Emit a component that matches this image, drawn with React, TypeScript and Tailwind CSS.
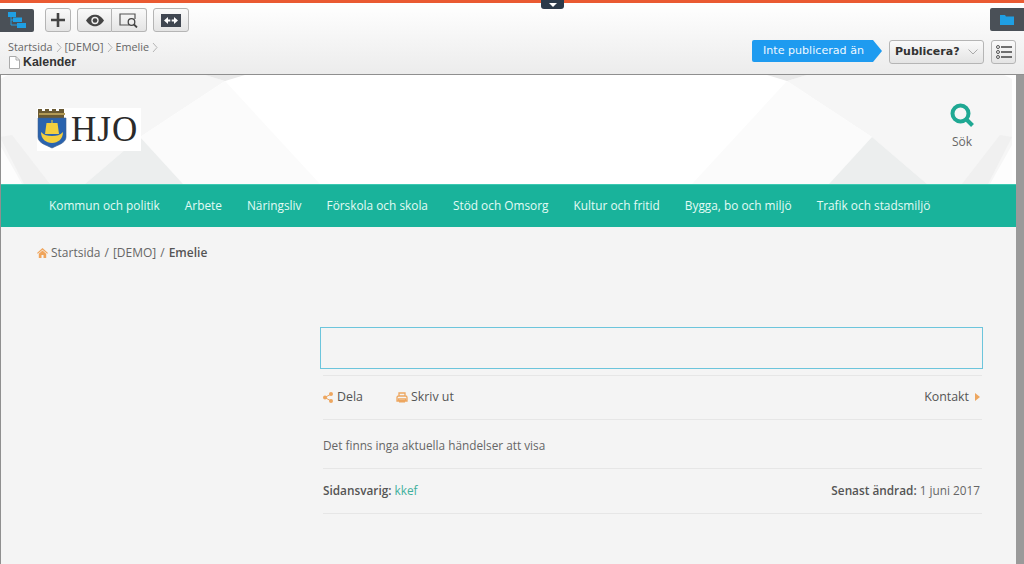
import React from "react";

const leftPolys: [string, string][] = [
  ["8,0 205,0 225,6 140,62 85,109 0,109 0,4", "#f6f6f6"],
  ["225,6 320,109 183,109 140,62", "#fbfbfb"],
  ["140,62 183,109 85,109", "#eceeee"],
  ["205,0 245,0 225,6", "#e9e9e9"],
  ["0,70 22,109 0,109", "#fdfdfd"],
  ["12,60 50,109 24,109 0,62", "#f0f0f0"],
];

function Btn({ className, children }: { className: string; children: React.ReactNode }) {
  return (
    <div className={"flex items-center justify-center h-[24px] border border-[#b5b5b5] bg-gradient-to-b from-[#fafafa] to-[#e4e4e4] " + className}>
      {children}
    </div>
  );
}

function Chev() {
  return (
    <svg width="6" height="11" viewBox="0 0 6 11" className="mx-[3px] inline-block">
      <path d="M1 1l4 4.500L1 10" fill="none" stroke="#b5b5b5" strokeWidth="1" />
    </svg>
  );
}

function Line() {
  return <div className="h-px bg-[#e6e6e6] ml-[3px] mr-px" />;
}

export default function App() {
  return (
    <div className="relative w-[1024px] h-[564px] overflow-hidden flex flex-col bg-[#f4f4f4] font-['Open_Sans',sans-serif]">
      {/* CMS toolbar */}
      <div className="relative h-[75px] shrink-0 border-t-[3px] border-t-[#ea5a32] border-b border-b-[#8f8f8f] bg-gradient-to-b from-white to-[#ececec]">
        <div className="absolute left-[541px] -top-[3px] w-[23px] h-[9px] rounded-b-[3px] bg-[#2b3a4a] flex justify-center items-start pt-[3px]">
          <div className="w-0 h-0 border-x-[4px] border-x-transparent border-t-[4px] border-t-white" />
        </div>

        <div className="flex items-start justify-between pt-[5px] h-[29px]">
          <div className="flex items-center">
            <div className="w-[34px] h-[23px] rounded-r-[2px] bg-[#4a5057] flex items-center justify-center">
              <svg width="18" height="16" viewBox="0 0 18 16">
                <path d="M3 4v9h7M3 8h5" fill="none" stroke="#1f9fe3" />
                <rect x="0" y="0" width="8" height="5" fill="#1f9fe3" />
                <rect x="5" y="5.500" width="9" height="4.500" fill="#1f9fe3" />
                <rect x="9" y="11" width="9" height="5" fill="#1f9fe3" />
              </svg>
            </div>
            <Btn className="ml-[11px] w-[26px] rounded-[3px]">
              <svg width="14" height="14" viewBox="0 0 14 14">
                <path d="M7 0v14M0 7h14" stroke="#444" strokeWidth="2.600" />
              </svg>
            </Btn>
            <div className="ml-[6px] flex">
              <Btn className="w-[35px] rounded-l-[3px]">
                <svg width="20" height="13" viewBox="0 0 20 13">
                  <path d="M1 6.500C4 2 7 .8 10 .8s6 1.200 9 5.700c-3 4.500-6 5.700-9 5.700s-6-1.200-9-5.700z" fill="#444" />
                  <circle cx="10" cy="6.500" r="3.700" fill="#eee" />
                  <circle cx="10" cy="6.500" r="2.300" fill="#444" />
                </svg>
              </Btn>
              <Btn className="w-[35px] rounded-r-[3px] border-l-0">
                <svg width="20" height="15" viewBox="0 0 20 15">
                  <path d="M10 12H1V1h15v5" fill="none" stroke="#555" strokeWidth="1.200" />
                  <circle cx="12.500" cy="9" r="3.300" fill="none" stroke="#444" strokeWidth="1.300" />
                  <path d="M15 11.500l3 3" stroke="#444" strokeWidth="1.800" />
                </svg>
              </Btn>
            </div>
            <Btn className="ml-[6px] w-[36px] rounded-[3px]">
              <svg width="20" height="13" viewBox="0 0 20 13">
                <rect width="20" height="13" fill="#3f4650" />
                <path d="M3 6.500l4-3.500v2.500h2.300v2H7V10zM17 6.500l-4-3.500v2.500h-2.300v2H13V10z" fill="#fff" />
              </svg>
            </Btn>
          </div>
          <div className="w-[34px] h-[23px] rounded-l-[2px] bg-[#4a5057] flex items-center justify-center">
            <svg width="14" height="11" viewBox="0 0 14 11">
              <path d="M0 1h5l1 1.500h8V11H0z" fill="#1f9fe3" />
            </svg>
          </div>
        </div>

        <div className="flex items-start justify-between h-[42px]">
          <div className="pl-[8px] pt-[9px]">
            <div className="flex items-center h-[12px] text-[10.800px] leading-[12px] text-[#666]">
              <span>Startsida</span><Chev /><span>[DEMO]</span><Chev /><span>Emelie</span><Chev />
            </div>
            <div className="flex items-center mt-[2px] h-[14px]">
              <svg width="11" height="13" viewBox="0 0 11 13" className="ml-px mr-[3px]">
                <path d="M.5.500h6.500l3.500 3.500v8.500H.5z" fill="#fff" stroke="#aaa" />
                <path d="M7 .500v3.500h3.500" fill="none" stroke="#aaa" />
              </svg>
              <span className="font-['Liberation_Sans',sans-serif] font-bold text-[12.400px] text-[#333]">Kalender</span>
            </div>
          </div>
          <div className="flex items-start pt-[8px] pr-[8px]">
            <div className="w-[130px] h-[22px] bg-[#1e9bf0] [clip-path:polygon(0_0,121px_0,100%_50%,121px_100%,0_100%)] rounded-l-[2px] flex items-center pl-[11px] text-[#eef8ff] font-['DejaVu_Sans',sans-serif] text-[11.100px] whitespace-nowrap">
              Inte publicerad än
            </div>
            <Btn className="ml-[7px] w-[95px] rounded-[3px] !justify-start pl-[5px] font-['DejaVu_Sans',sans-serif] font-bold text-[11px] text-[#333]">
              Publicera?
              <svg width="10" height="6" viewBox="0 0 10 6" className="ml-[8px]">
                <path d="M.5.500L5 5l4.500-4.500" fill="none" stroke="#aaa" />
              </svg>
            </Btn>
            <Btn className="ml-[7px] w-[25px] rounded-[3px]">
              <svg width="16" height="14" viewBox="0 0 16 14">
                <circle cx="2" cy="2" r="1.500" fill="none" stroke="#555" />
                <circle cx="2" cy="7" r="1.500" fill="none" stroke="#555" />
                <circle cx="2" cy="12" r="1.500" fill="none" stroke="#555" />
                <path d="M5 2h11M5 7h11M5 12h11" stroke="#444" strokeWidth="1.300" />
              </svg>
            </Btn>
          </div>
        </div>
      </div>

      {/* Page */}
      <div className="flex-1 flex min-h-0">
        <div className="w-px bg-[#8f8f8f] shrink-0" />
        <div className="flex-1 min-w-0 flex flex-col">
          <header className="relative h-[109px] shrink-0 bg-white">
            <svg className="absolute inset-0" width="1015" height="109" viewBox="1 0 1015 109">
              {leftPolys.map(([p, c]) => (
                <polygon key={p} points={p} fill={c} />
              ))}
              <g transform="translate(1012 0) scale(-1 1)">
                {leftPolys.map(([p, c]) => (
                  <polygon key={p} points={p} fill={c} />
                ))}
              </g>
            </svg>
            <div className="relative h-full flex justify-between">
              <div className="ml-[36px] mt-[33px] w-[104px] h-[43px] bg-white flex items-start">
                <svg width="30" height="41" viewBox="0 0 30 41">
                  <path d="M1 1h4v2h3V1h4v2h3V1h4v2h3V1h5v9H1z" fill="#6a5a33" />
                  <path d="M2 5h26v2H2z" fill="#b39a55" />
                  <path d="M1 10h28v19c0 6-8 8-14 11C9 37 1 35 1 29z" fill="#2a63ae" stroke="#3f5f8a" strokeWidth=".6" />
                  <path d="M14.500 12h1v3h5l1.500 11H8l1.500-11h5z" fill="#f3cf3e" />
                  <path d="M4 24c3 3 6 4 11 4s8-1 11-4c0 7-5 11-11 11S4 31 4 24z" fill="#f3cf3e" />
                </svg>
                <span className="ml-[4px] mt-[1px] font-['Liberation_Serif',serif] text-[35px] leading-[42px] tracking-[1px] text-[#2a2a2a]">HJO</span>
              </div>
              <div className="mr-[34px] mt-[28px] flex flex-col items-center w-[40px]">
                <svg width="24" height="24" viewBox="0 0 24 24">
                  <circle cx="10.500" cy="10.500" r="8" fill="none" stroke="#1fa893" strokeWidth="4" />
                  <path d="M16.500 16.500l6 6" stroke="#1fa893" strokeWidth="4" />
                </svg>
                <span className="mt-[6px] text-[12px] leading-[18px] text-[#666]">Sök</span>
              </div>
            </div>
          </header>

          <nav className="h-[43px] shrink-0 bg-[#19b39b] border-t border-t-[#3cc9b2] flex items-center pl-[48px] gap-[25px] text-[11.850px] text-[#e3fbf5] whitespace-nowrap">
            <span>Kommun och politik</span>
            <span>Arbete</span>
            <span>Näringsliv</span>
            <span>Förskola och skola</span>
            <span>Stöd och Omsorg</span>
            <span>Kultur och fritid</span>
            <span>Bygga, bo och miljö</span>
            <span>Trafik och stadsmiljö</span>
          </nav>

          <div className="flex items-center pl-[36px] mt-[17px] h-[18px] text-[12px] text-[#666]">
            <svg width="11" height="10" viewBox="0 0 11 10" className="mr-[3px]">
              <path d="M5.500 0L11 5l-.8.800L5.500 1.700.8 5.800 0 5z" fill="#f0a45a" />
              <path d="M1.800 5.800L5.500 2.500l3.700 3.300V10H6.500V7h-2v3H1.800z" fill="#f0a45a" />
            </svg>
            <span>Startsida</span>
            <span className="mx-[4px]">/</span>
            <span>[DEMO]</span>
            <span className="mx-[4px]">/</span>
            <span className="font-semibold text-[#555]">Emelie</span>
          </div>

          <main className="ml-[319px] w-[663px] mt-[65px]">
            <div className="h-[42px] border border-[#6cc5dc]" />
            <div className="mt-[6px]"><Line /></div>
            <div className="h-[43px] flex items-center justify-between pl-[3px] pr-[3px] text-[12.400px] font-medium text-[#555]">
              <div className="flex items-center">
                <svg width="10" height="11" viewBox="0 0 10 11" className="mr-[4px]">
                  <circle cx="2" cy="5.500" r="2" fill="#eda65f" />
                  <circle cx="8" cy="2" r="2" fill="#eda65f" />
                  <circle cx="8" cy="9" r="2" fill="#eda65f" />
                  <path d="M2 5.500L8 2M2 5.500L8 9" stroke="#eda65f" />
                </svg>
                <span>Dela</span>
                <svg width="12" height="11" viewBox="0 0 12 11" className="ml-[33px] mr-[3px]">
                  <path d="M3 4V1h6v3M1 9V5.500A1.500 1.500 0 0 1 2.500 4h7A1.500 1.500 0 0 1 11 5.500V9H9.500V7h-7v2z" fill="none" stroke="#eda65f" strokeWidth="1.300" />
                  <path d="M3 8h6v2.500H3z" fill="#eda65f" />
                </svg>
                <span>Skriv ut</span>
              </div>
              <div className="flex items-center">
                <span>Kontakt</span>
                <div className="ml-[6px] w-0 h-0 border-y-[4.500px] border-y-transparent border-l-[5px] border-l-[#eda65f]" />
              </div>
            </div>
            <Line />
            <div className="h-[48px] flex items-center pl-[3px] pt-[3px] text-[11.800px] text-[#666]">Det finns inga aktuella händelser att visa</div>
            <Line />
            <div className="h-[44px] flex items-center justify-between pl-[3px] pr-[3px] text-[11.800px] text-[#666]">
              <div><span className="font-semibold text-[#555]">Sidansvarig:</span> <span className="text-[#3fb09c]">kkef</span></div>
              <div><span className="font-semibold text-[#555]">Senast ändrad:</span> 1 juni 2017</div>
            </div>
            <Line />
          </main>
        </div>
        <div className="w-[8px] bg-[#9a9a9a] shrink-0" />
      </div>
    </div>
  );
}
